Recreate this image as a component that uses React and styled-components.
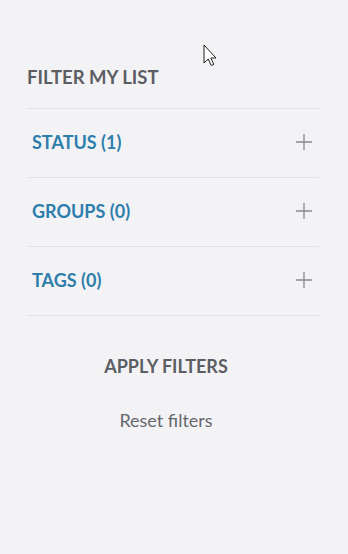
import React from "react";
import styled, { createGlobalStyle } from "styled-components";

const GlobalStyle = createGlobalStyle`
  html, body {
    margin: 0;
    padding: 0;
    background: #f3f3f6;
    font-family: Lato, "Open Sans", sans-serif;
  }
`;

const Page = styled.div`
  position: relative;
  width: 348px;
  height: 554px;
  background: #f3f3f6;
  overflow: hidden;
`;

const Panel = styled.div`
  padding: 64px 29px 0 27px;
`;

const Title = styled.h2`
  margin: 0;
  font-size: 18.5px;
  font-weight: 700;
  color: #5c5e64;
  line-height: 26px;
  padding-bottom: 18px;
  border-bottom: 1px solid #e3e3e7;
`;

const Row = styled.div`
  display: flex;
  align-items: center;
  justify-content: space-between;
  height: 65px;
  padding: 0 6px 3px 5px;
  border-bottom: 1px solid #e3e3e7;
  cursor: pointer;
`;

const RowLabel = styled.span`
  font-size: 18px;
  font-weight: 700;
  color: #2e7eac;
`;

const Actions = styled.div`
  display: flex;
  flex-direction: column;
  align-items: center;
  padding: 39px 14px 0 0;
  gap: 32px;
`;

const ApplyButton = styled.button`
  border: none;
  background: none;
  padding: 0;
  font-family: inherit;
  font-size: 18px;
  font-weight: 700;
  color: #5c5e64;
  cursor: pointer;
`;

const ResetLink = styled.a`
  font-size: 18px;
  color: #66686c;
  text-decoration: none;
  cursor: pointer;
`;

const Cursor = styled.svg`
  position: absolute;
  left: 203px;
  top: 44px;
`;

function Plus() {
  return (
    <svg width="18" height="18" viewBox="0 0 18 18">
      <path d="M9 1v16M1 9h16" stroke="#8a8a8e" strokeWidth="1.3" fill="none" />
    </svg>
  );
}

const filters = [
  { label: "STATUS", count: 1 },
  { label: "GROUPS", count: 0 },
  { label: "TAGS", count: 0 },
];

export default function App() {
  return (
    <Page>
      <GlobalStyle />
      <Panel>
        <Title>FILTER MY LIST</Title>
        {filters.map((f) => (
          <Row key={f.label}>
            <RowLabel>
              {f.label} ({f.count})
            </RowLabel>
            <Plus />
          </Row>
        ))}
        <Actions>
          <ApplyButton>APPLY FILTERS</ApplyButton>
          <ResetLink>Reset filters</ResetLink>
        </Actions>
      </Panel>
      <Cursor width="16" height="24" viewBox="0 0 16 24">
        <path
          d="M1 1v18l4.2-4 3 6.5 2.6-1.2-3-6.3H13z"
          fill="#fff"
          stroke="#222"
          strokeWidth="1"
          strokeLinejoin="round"
        />
      </Cursor>
    </Page>
  );
}
